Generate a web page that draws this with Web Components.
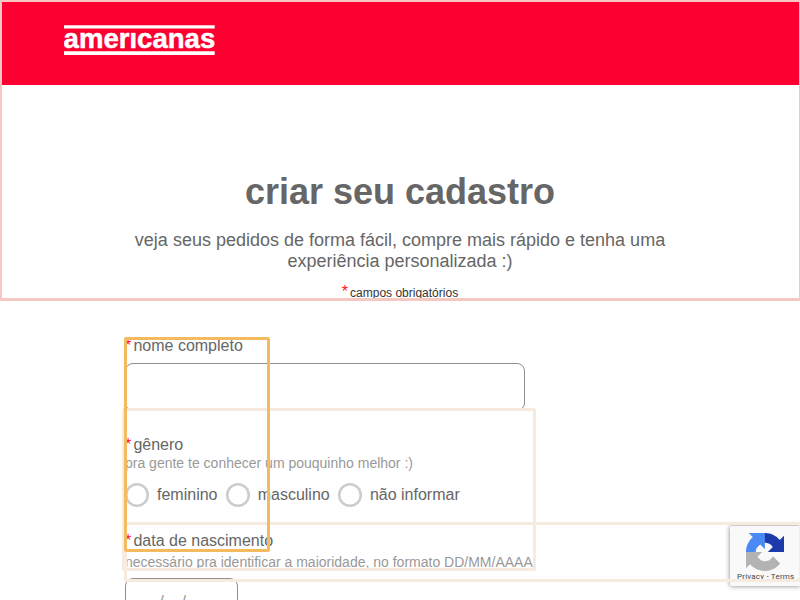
<!DOCTYPE html>
<html lang="pt-BR">
<head>
<meta charset="utf-8">
<title>criar seu cadastro</title>
<style>
html,body{margin:0;height:100%;overflow:hidden;background:#fff;font-family:"Liberation Sans",Arial,sans-serif;color:#666}
</style>
</head>
<body>
<signup-page></signup-page>
<script>
function define(name, html) {
  customElements.define(name, class extends HTMLElement {
    constructor() {
      super();
      const t = document.createElement('template');
      t.innerHTML = html;
      this.attachShadow({mode: 'open'}).append(t.content.cloneNode(true));
    }
  });
}

define('brand-header', `
<style>
:host{display:block;box-sizing:border-box;height:85px;padding:25px 0 0 64px;background:#fc0032}
svg{display:block}
text{font:bold 28.5px "Liberation Sans",Arial,sans-serif;fill:#fff;stroke:#fff;stroke-width:.5px}
</style>
<svg width="152" height="32" viewBox="0 0 152 32">
<text x="-0.4" y="23.2" textLength="151.6" lengthAdjust="spacingAndGlyphs">americanas</text>
<path d="M65 2h9v5.4h-9z" fill="#fc0032"/>
<path d="M0 .2h150.7v3.3H0zM0 26.3h150.7v3.6H0z" fill="#fff"/>
</svg>`);

define('page-intro', `
<style>
:host{display:block;box-sizing:border-box;height:213px;padding-top:86px;text-align:center}
h1{margin:0;font-size:36px;line-height:42px;font-weight:bold}
p{margin:17px auto 0;width:550px;font-size:18px;line-height:21px}
small{display:block;margin-top:11px;font-size:12px;line-height:18px;color:#333}
b{font-weight:400;font-size:16px;color:#ff1028;margin-right:2px}
</style>
<h1><slot name="title"></slot></h1>
<p><slot></slot></p>
<small><b>*</b><slot name="note"></slot></small>`);

define('field-label', `
<style>
:host{display:block;font-size:16px;line-height:18px;height:18px;white-space:nowrap}
b{font-weight:400;color:#ff1028;margin-right:2.2px}
</style><b>*</b><slot></slot>`);

define('field-hint', `
<style>:host{display:block;font-size:14px;line-height:16px;color:#999;white-space:nowrap}</style><slot></slot>`);

define('text-box', `
<style>
:host{display:block;box-sizing:border-box;width:var(--w,400px);height:48px;border:1px solid #8f8f8f;border-radius:8px;padding:14px 0 0 15.5px;font-size:16px;line-height:18px;color:#999;white-space:nowrap}
</style><slot></slot>`);

define('radio-option', `
<style>
:host{display:flex;align-items:center;gap:8px;font-size:16px;line-height:18px}
i{width:24px;height:24px;box-shadow:inset 0 0 0 2.5px #ccc;border-radius:50%}
</style><i></i><span><slot></slot></span>`);

define('highlight-frame', `
<style>:host{position:absolute;box-sizing:border-box;border:3px solid var(--c);border-radius:var(--r,2px);pointer-events:none}</style>`);

define('captcha-badge', `
<style>
:host{position:absolute;left:730px;top:526px;width:70px;height:60px;box-sizing:border-box;background:#f9f9f9;border-radius:2px 0 0 2px;box-shadow:0 0 5px #808080;padding-top:6.5px}
svg{display:block;margin-left:16px}
div{margin:1.5px 0 0 7px;font:8px/10px Roboto,sans-serif;color:#444;white-space:nowrap;letter-spacing:.2px}
</style>
<svg width="38" height="38" viewBox="0 0 64 64">
<path d="M64 31.955l-.002-1.377V4.687l-7.158 7.16C50.992 4.674 42.084.094 32.107.094c-10.383 0-19.606 4.96-25.46 12.64l11.736 11.86a15.55 15.55 0 0 1 4.754-5.334c2.05-1.6 4.952-2.906 8.968-2.906.485 0 .86.057 1.135.163 4.976.393 9.288 3.14 11.828 7.124l-8.307 8.307 27.24-.007" fill="#1c3aa9"/>
<path d="M31.862.094l-1.377.002H4.594l7.16 7.159C4.58 13.11 0 22.019 0 31.995c0 10.384 4.96 19.607 12.64 25.46l11.86-11.735a15.55 15.55 0 0 1-5.334-4.755c-1.6-2.05-2.906-4.952-2.906-8.967 0-.486.057-.86.163-1.136.393-4.975 3.14-9.287 7.124-11.827l8.307 8.307-.007-27.24" fill="#4a8af5"/>
<path d="M0 32l.002 1.377v25.89l7.16-7.159c5.856 7.174 14.764 11.754 24.742 11.754 10.383 0 19.606-4.96 25.46-12.64L45.628 39.36a15.55 15.55 0 0 1-4.754 5.334c-2.05 1.6-4.952 2.906-8.968 2.906-.485 0-.86-.057-1.135-.163-4.976-.393-9.288-3.14-11.828-7.124l8.307-8.307L0 32" fill="#b3b3b3"/>
</svg>
<div>Privacy - Terms</div>`);

define('signup-form', `
<style>
:host{display:block;padding:39px 0 0 125px}
.radios{display:flex;gap:8.2px;margin-top:12px}
</style>
<field-label>nome completo</field-label>
<text-box style="margin-top:8px"></text-box>
<field-label style="margin-top:25px">gênero</field-label>
<field-hint style="margin-top:1px">pra gente te conhecer um pouquinho melhor :)</field-hint>
<div class="radios"><radio-option>feminino</radio-option><radio-option>masculino</radio-option><radio-option>não informar</radio-option></div>
<field-label style="margin-top:25px">data de nascimento</field-label>
<field-hint style="margin-top:4px">necessário pra identificar a maioridade, no formato DD/MM/AAAA</field-hint>
<text-box style="--w:113px;margin-top:8px">__/__/____</text-box>`);

define('signup-page', `
<style>
:host{display:block;position:relative;width:800px;height:600px;overflow:hidden}
</style>
<brand-header></brand-header>
<page-intro><span slot="title">criar seu cadastro</span>veja seus pedidos de forma fácil, compre mais rápido e tenha uma experiência personalizada :)<span slot="note">campos obrigatórios</span></page-intro>
<signup-form></signup-form>
<captcha-badge></captcha-badge>
<highlight-frame style="left:-1px;top:-1px;width:803px;height:302px;--c:#f5c9c1"></highlight-frame>
<highlight-frame style="left:122px;top:408px;width:414px;height:163px;--c:#f7eadf"></highlight-frame>
<highlight-frame style="left:124px;top:522px;width:678px;height:60px;--c:#f7eadf"></highlight-frame>
<highlight-frame style="left:124px;top:337px;width:146px;height:215px;--c:#f4bb5e"></highlight-frame>`);
</script>
</body>
</html>
